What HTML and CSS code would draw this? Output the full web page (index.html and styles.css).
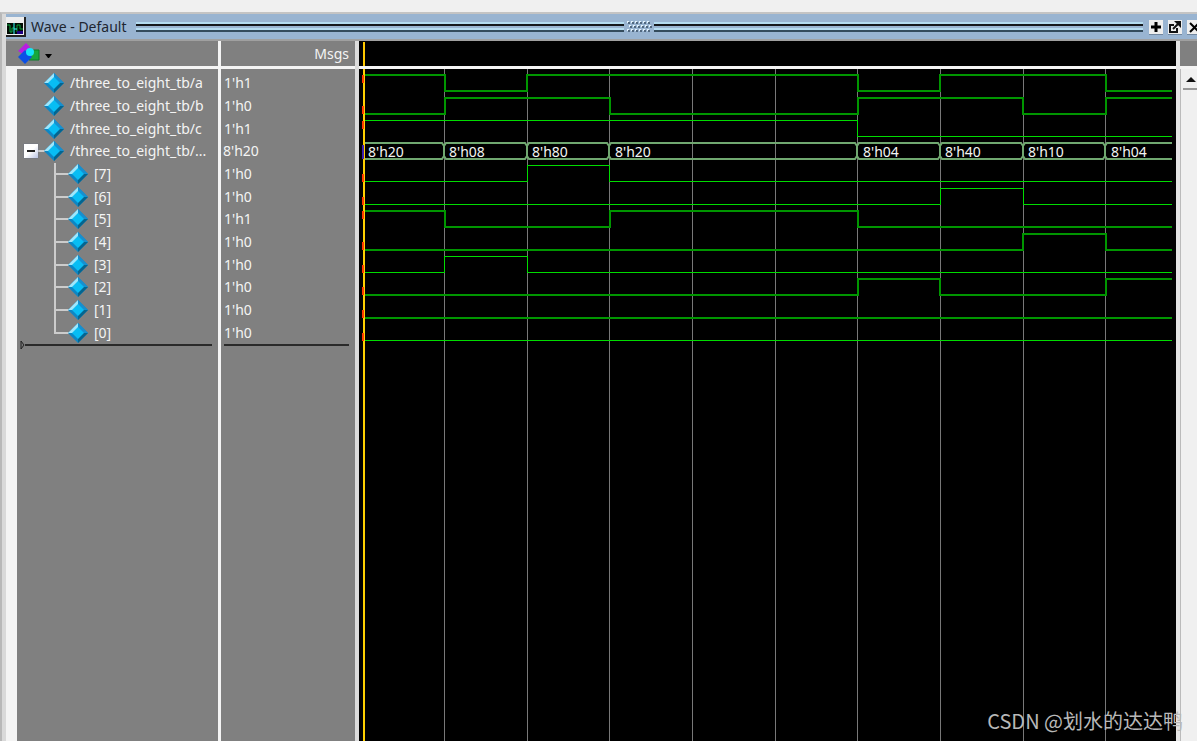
FILE: index.html
```
<!DOCTYPE html>
<html lang="en">
<head>
<meta charset="utf-8">
<title>Wave - Default</title>
<link rel="stylesheet" href="styles.css">
</head>
<body>
<svg class="defs" width="0" height="0" aria-hidden="true">
  <symbol id="gem" viewBox="0 0 20 20">
    <path d="M10 0L20 10L10 20L0 10Z" fill="#0d86c4"/>
    <path d="M10 0L0 10H5L10 5Z" fill="#9fe6fb"/>
    <path d="M10 0L20 10H15L10 5Z" fill="#1590d0"/>
    <path d="M20 10L10 20V15L15 10Z" fill="#04658f"/>
    <path d="M10 4L16 10L10 16L4 10Z" fill="#08bdf4"/>
  </symbol>
</svg>
<div class="window">
  <header class="titlebar">
    <svg class="app-icon" viewBox="0 0 20 20" aria-hidden="true">
      <path d="M0 0H20V20H0Z" fill="#222"/><path d="M0 0H18V18H0Z" fill="#eee"/>
      <path d="M1 6H17V17H1Z" fill="#020d05"/>
      <path d="M1 8H4V15H6V11H8M11 15V8H14V12H17" fill="none" stroke="#08a53c" stroke-width="1"/>
      <path d="M8 6V17M8 12H11" stroke="#3ff" stroke-width="1"/><path d="M11 14H17V17H11Z" fill="#200080"/>
    </svg>
    <h1 class="title">Wave - Default</h1>
    <div class="groove"></div>
    <svg class="grip" viewBox="0 0 26 12" aria-hidden="true">
      <path d="M1 1H24M3 5H26M1 9H24" stroke="#e4f2fc" stroke-width="2" stroke-dasharray="2 2"/>
      <path d="M2 2H25M4 6H26M2 10H25" stroke="#51677f" stroke-width="2" stroke-dasharray="2 2"/>
    </svg>
    <div class="groove"></div>
    <div class="tools">
      <button class="tool" aria-label="Zoom pane"><svg viewBox="0 0 14 14"><path d="M7 2V12M2 7H12" stroke="#000" stroke-width="3"/></svg></button>
      <button class="tool" aria-label="Undock"><svg viewBox="0 0 14 14" fill="none" stroke="#111"><path d="M6 5H2V12H9V8" stroke-width="2"/><path d="M5 9L11 3" stroke-width="2"/><path d="M6 1H13V8Z" fill="#111" stroke="none"/></svg></button>
      <button class="tool" aria-label="Close"><svg viewBox="0 0 14 14"><path d="M3 3L12 12M12 3L3 12" stroke="#000" stroke-width="2"/></svg></button>
    </div>
  </header>
  <main class="panes">
    <section class="names">
      <div class="head">
        <button class="menu" aria-label="Column menu">
          <svg class="menu-icon" viewBox="0 0 36 22">
            <path d="M11 7H21V17H11Z" fill="#17a83c" stroke="#0b7d2a"/>
            <path d="M8 0L12 4L5 11L0 8Z" fill="#b81fe0"/>
            <path d="M7 7L14 14L7 21L0 14Z" fill="#0b50e6"/>
            <circle cx="12" cy="9" r="4" fill="#16e4f8"/>
            <path d="M27 11H34L31 15H30Z" fill="#000"/>
          </svg>
        </button>
      </div>
      <div class="body">
        <ul class="rows">
          <li class="signal"><svg class="gem"><use href="#gem"/></svg>/three_to_eight_tb/a</li>
          <li class="signal"><svg class="gem"><use href="#gem"/></svg>/three_to_eight_tb/b</li>
          <li class="signal"><svg class="gem"><use href="#gem"/></svg>/three_to_eight_tb/c</li>
          <li class="signal parent"><button class="toggle" aria-label="Collapse"></button><svg class="gem"><use href="#gem"/></svg>/three_to_eight_tb/...</li>
          <li class="bit"><svg class="gem"><use href="#gem"/></svg>[7]</li>
          <li class="bit"><svg class="gem"><use href="#gem"/></svg>[6]</li>
          <li class="bit"><svg class="gem"><use href="#gem"/></svg>[5]</li>
          <li class="bit"><svg class="gem"><use href="#gem"/></svg>[4]</li>
          <li class="bit"><svg class="gem"><use href="#gem"/></svg>[3]</li>
          <li class="bit"><svg class="gem"><use href="#gem"/></svg>[2]</li>
          <li class="bit"><svg class="gem"><use href="#gem"/></svg>[1]</li>
          <li class="bit last"><svg class="gem"><use href="#gem"/></svg>[0]</li>
        </ul>
        <div class="end"><svg class="end-mark" viewBox="0 0 5 10"><path d="M1 1L4 5L1 9Z" fill="#777" stroke="#222"/></svg><div class="rule"></div></div>
      </div>
    </section>
    <section class="values">
      <div class="head">Msgs</div>
      <div class="body">
        <ul class="rows">
          <li>1'h1</li><li>1'h0</li><li>1'h1</li><li class="bus-value">8'h20</li><li>1'h0</li><li>1'h0</li>
          <li>1'h1</li><li>1'h0</li><li>1'h0</li><li>1'h0</li><li>1'h0</li><li>1'h0</li>
        </ul>
        <div class="end"><div class="rule"></div></div>
      </div>
    </section>
    <section class="waves">
      <div class="head"></div>
      <div class="body">
        <svg class="plot" width="100%" height="100%">
          <g class="grid">
            <line x1="85" x2="85" y2="100%"/><line x1="168" x2="168" y2="100%"/><line x1="250" x2="250" y2="100%"/>
            <line x1="333" x2="333" y2="100%"/><line x1="416" x2="416" y2="100%"/><line x1="498" x2="498" y2="100%"/>
            <line x1="581" x2="581" y2="100%"/><line x1="664" x2="664" y2="100%"/><line x1="746" x2="746" y2="100%"/>
          </g>
          <g class="trace">
            <path d="M6 6H86V22H168V6H499V22H581V6H747V22H813"/>
            <path d="M6 45H86V29H251V45H499V29H664V45H747V29H813"/>
            <path class="thin" d="M6 51H498V67H813"/>
            <path class="thin" d="M6 112H168V96H250V112H813"/>
            <path class="thin" d="M6 135H581V119H664V135H813"/>
            <path d="M6 142H86V158H251V142H499V158H813"/>
            <path d="M6 181H664V165H747V181H813"/>
            <path class="thin" d="M6 203H85V187H168V203H813"/>
            <path d="M6 226H499V210H581V226H747V210H813"/>
            <path d="M6 249H813"/>
            <path class="thin" d="M6 271H813"/>
          </g>
          <path class="bus" d="M6 74H83L85 77V87L83 90H6M813 74H748L746 77V87L748 90H813M87 74H166L168 77V87L166 90H87L85 87V77ZM170 74H248L250 77V87L248 90H170L168 87V77ZM252 74H496L498 77V87L496 90H252L250 87V77ZM500 74H579L581 77V87L579 90H500L498 87V77ZM583 74H662L664 77V87L662 90H583L581 87V77ZM666 74H744L746 77V87L744 90H666L664 87V77Z"/>
          <g class="bus-text">
            <text x="9" y="88">8'h20</text><text x="90" y="88">8'h08</text><text x="173" y="88">8'h80</text>
            <text x="256" y="88">8'h20</text><text x="504" y="88">8'h04</text><text x="586" y="88">8'h40</text>
            <text x="669" y="88">8'h10</text><text x="752" y="88">8'h04</text>
          </g>
          <line class="cursor" x1="5" x2="5" y2="100%"/>
          <path class="ticks" d="M4 6V14M4 37V45M4 52V60M4 105V113M4 128V136M4 142V150M4 173V181M4 196V204M4 218V226M4 241V249M4 264V272"/>
          <path class="bus-tick" d="M4 76V90"/>
        </svg>
      </div>
    </section>
    <aside class="scroll">
      <div class="head"></div>
      <div class="track"><button class="up" aria-label="Scroll up"><svg viewBox="0 0 10 6"><path d="M5 0L10 5H0Z" fill="#111"/></svg></button></div>
    </aside>
  </main>
</div>
<div class="watermark">CSDN @划水的达达鸭</div>
</body>
</html>
```
FILE: styles.css
```
* { box-sizing: border-box; }
body {
  margin: 0;
  height: 100vh;
  overflow: hidden;
  padding-top: 12px;
  background: #f0f0f0;
  font: 14px/20px "Noto Sans", "Open Sans", sans-serif;
  color: #f4f4f4;
}
.defs { position: absolute; }
button { padding: 0; border: 0; background: none; }
ul { list-style: none; margin: 0; padding: 0; }
svg { display: block; }

.window {
  height: 100%;
  display: flex;
  flex-direction: column;
  border-top: 2px solid #c4c4c4;
  border-left: 2px solid #b8b8b8;
  background: #d9d9d9;
  padding-left: 4px;
}
.titlebar {
  display: flex;
  align-items: center;
  height: 25px;
  flex: none;
  background: #99b4d1;
  color: #202630;
}
.app-icon { width: 20px; height: 20px; flex: none; margin-right: 5px; }
.title { margin: 0 9px 0 0; font-size: 14px; font-weight: 400; white-space: nowrap; flex: none; }
.groove {
  flex: 1;
  height: 10px;
  background: linear-gradient(#b4dcf0 2px, #15191d 2px 4px, transparent 4px 6px, #b4dcf0 6px 8px, #344b5c 8px);
}
.grip { width: 26px; height: 12px; flex: none; margin: 0 2px; }
.tools { display: flex; gap: 5px; margin: 0 -4px 0 6px; flex: none; }
.tool { width: 14px; height: 14px; background: #eee; box-shadow: 0 1px #7388a0; }

.panes {
  flex: 1;
  min-height: 0;
  display: flex;
  border-top: 2px solid #a0a0a0;
  background: #f4f4f4;
}
.panes > * { display: flex; flex-direction: column; }
.head {
  flex: none;
  height: 28px;
  display: flex;
  align-items: center;
  background: #808080;
  border-bottom: 3px solid #f4f4f4;
}
.body { flex: 1; min-height: 0; background: #808080; padding-top: 3px; }
.names { width: 215px; border-right: 3px solid #f4f4f4; }
.names .head { padding-left: 12px; }
.names .body { margin-left: 11px; }
.menu-icon { width: 36px; height: 22px; }
.values { width: 138px; border-right: 4px solid #dcdcdc; }
.values .head { justify-content: flex-end; padding-right: 6px; }
.values li { padding-left: 3px; }
.values .bus-value { padding-left: 2px; }

.rows { display: grid; grid-template-rows: repeat(12, 1fr); height: 272px; }
.rows li { display: flex; align-items: center; white-space: nowrap; min-height: 0; }
.gem { width: 20px; height: 20px; flex: none; margin-right: 6px; }
.signal { padding-left: 27px; }
.parent {
  padding-left: 7px;
  background: linear-gradient(#ccc, #ccc) 20px 50% / 10px 2px no-repeat;
}
.toggle {
  width: 14px; height: 14px;
  flex: none;
  margin-right: 6px;
  background: linear-gradient(#222, #222) center / 8px 2px no-repeat, linear-gradient(135deg, #fff 50%, #b9c3e4);
  box-shadow: 0 0 1px #5c648a;
}
.bit { margin-left: 37px; background: linear-gradient(#ccc, #ccc) 0 50% / 14px 2px no-repeat; border-left: 2px solid #ccc; padding-left: 12px; }
.bit.last { border-image: linear-gradient(#ccc 55%, transparent 55%) 1; border-width: 0 0 0 2px; border-style: solid; }
.end { display: flex; align-items: center; height: 2px; padding: 0 6px 0 3px; }
.end-mark { width: 5px; height: 10px; flex: none; }
.rule { flex: 1; height: 2px; background: #2a2a2a; }

.waves { flex: 1; min-width: 0; border-right: 4px solid #e4e4e4; }
.waves .head { background: linear-gradient(#ffc800, #ffc800) 4px 1px / 2px 100% no-repeat #000; }
.waves .body { background: #000; padding: 0; }
.plot { shape-rendering: crispEdges; }
.grid { stroke: #787878; stroke-width: 1; }
.trace { fill: none; stroke: #009600; stroke-width: 2; }
.trace .thin { stroke: #00dc00; stroke-width: 1; }
.bus { fill: none; stroke: #70a870; stroke-width: 2; shape-rendering: auto; }
.bus-text { fill: #f4f4f4; font-size: 14px; }
.cursor { stroke: #ffd000; stroke-width: 2; }
.ticks { stroke: #ff3c00; stroke-width: 2; }
.bus-tick { stroke: #3c20b0; stroke-width: 2; }

.scroll { width: 17px; }
.track { flex: 1; background: #f0f0f0; padding: 2px 0 0 2px; border-left: 1px solid #bbb; }
.up { display: grid; place-items: center; width: 100%; height: 19px; border-bottom: 2px solid #999; background: #f0f0f0; padding-left: 2px; }
.up svg { width: 10px; height: 6px; }

.watermark {
  position: absolute;
  right: 14px;
  bottom: 5px;
  font: 20px/30px "Noto Sans CJK SC", sans-serif;
  color: #b8b8b8;
}
```
